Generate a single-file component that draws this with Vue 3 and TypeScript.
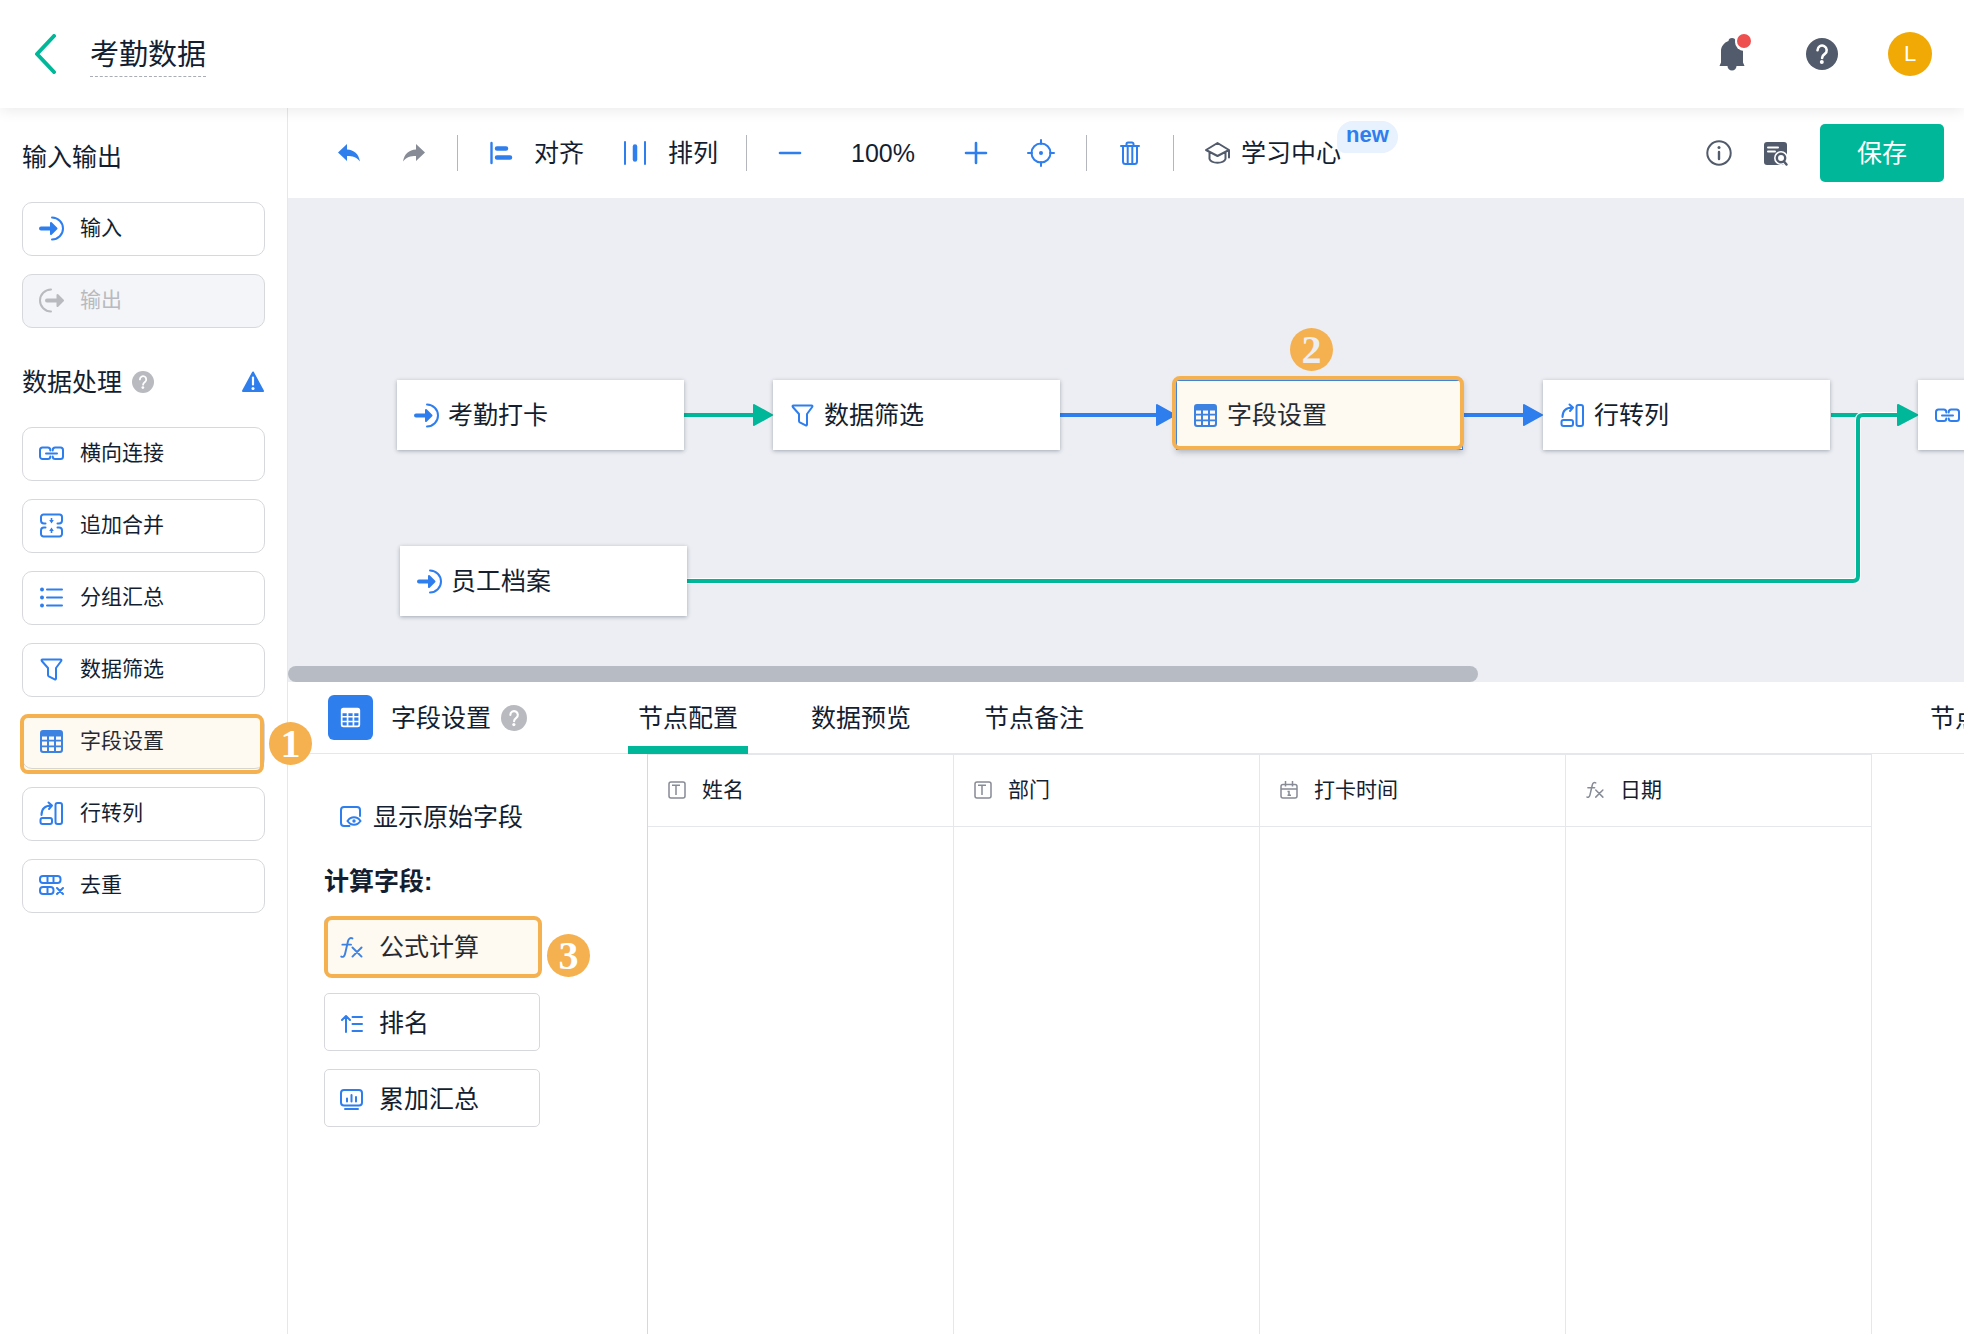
<script setup lang="ts">
import { ref } from 'vue'

interface Operator {
  name: string
  icon: string
}

interface FlowNode extends Operator {
  id: number
  x: number
  y: number
  step?: number
}

const processing: Operator[] = [
  { name: '横向连接', icon: 'link' },
  { name: '追加合并', icon: 'merge' },
  { name: '分组汇总', icon: 'list' },
  { name: '数据筛选', icon: 'filter' },
  { name: '字段设置', icon: 'grid' },
  { name: '行转列', icon: 'pivot' },
  { name: '去重', icon: 'dedupe' },
]
const activeOperator = ref('字段设置')

const nodes: FlowNode[] = [
  { id: 1, name: '考勤打卡', icon: 'input', x: 109, y: 182 },
  { id: 2, name: '数据筛选', icon: 'filter', x: 485, y: 182 },
  { id: 3, name: '字段设置', icon: 'grid', x: 888, y: 182, step: 2 },
  { id: 4, name: '行转列', icon: 'pivot', x: 1255, y: 182 },
  { id: 5, name: '', icon: 'link', x: 1630, y: 182 },
  { id: 6, name: '员工档案', icon: 'input', x: 112, y: 348 },
]

const tabs = ['节点配置', '数据预览', '节点备注']
const activeTab = ref(tabs[0])

const columns: Operator[] = [
  { name: '姓名', icon: 'text' },
  { name: '部门', icon: 'text' },
  { name: '打卡时间', icon: 'calendar' },
  { name: '日期', icon: 'fx' },
]
</script>

<template>
  <div class="app">
    <svg class="sprite" aria-hidden="true">
      <symbol id="input" viewBox="0 0 25 25">
        <path d="M13 1.5a11 11 0 0 1 0 22" fill="none" stroke="currentColor" stroke-width="2" stroke-linecap="round" />
        <path d="M2 12.500h10" stroke="currentColor" stroke-width="4" stroke-linecap="round" />
        <path d="M12 7l5.500 5.500-5.500 5.500z" fill="currentColor" stroke="currentColor" stroke-width="2" stroke-linejoin="round" />
      </symbol>
      <symbol id="output" viewBox="0 0 25 25">
        <path d="M12 1.500a11 11 0 0 0 0 22" fill="none" stroke="currentColor" stroke-width="2" stroke-linecap="round" />
        <path d="M8 12.500h10" stroke="currentColor" stroke-width="4" stroke-linecap="round" />
        <path d="M18.500 7l5.500 5.500-5.500 5.500z" fill="currentColor" stroke="currentColor" stroke-width="2" stroke-linejoin="round" />
      </symbol>
      <symbol id="link" viewBox="0 0 25 25">
        <g fill="none" stroke="currentColor" stroke-width="2" stroke-linecap="round">
          <path d="M11.300 9.500V9a2.500 2.500 0 0 0-2.500-2.500H3.500A2.500 2.500 0 0 0 1 9v6.500A2.500 2.500 0 0 0 3.500 18h5.300a2.500 2.500 0 0 0 2.500-2.500" />
          <path d="M13.700 9.500V9a2.500 2.500 0 0 1 2.500-2.500h5.300A2.500 2.500 0 0 1 24 9v6.500a2.500 2.500 0 0 1-2.500 2.500h-5.300a2.500 2.500 0 0 1-2.500-2.500" />
          <path d="M7 12.500h11" />
        </g>
      </symbol>
      <symbol id="merge" viewBox="0 0 25 25">
        <g fill="none" stroke="currentColor" stroke-width="2" stroke-linecap="round">
          <path d="M6.500 10.500H5A3 3 0 0 1 2 7.500V4a2.500 2.500 0 0 1 2.500-2.500h16A2.500 2.500 0 0 1 23 4v3.500a3 3 0 0 1-3 3h-1.500" />
          <path d="M6.500 14.500H5a3 3 0 0 0-3 3V21a2.500 2.500 0 0 0 2.500 2.500h16A2.500 2.500 0 0 0 23 21v-3.500a3 3 0 0 0-3-3h-1.500" />
        </g>
        <path d="M11.700 5h1.600v2h1.500L12.500 10.500 10.200 7h1.500zM11.700 20h1.600v-2h1.500L12.500 14.500 10.200 18h1.500z" fill="currentColor" />
      </symbol>
      <symbol id="list" viewBox="0 0 25 25">
        <path d="M8 4.500h15M8 12.500h15M8 20.500h15" stroke="currentColor" stroke-width="2" stroke-linecap="round" />
        <g fill="currentColor">
          <circle cx="3" cy="4.500" r="2" /><circle cx="3" cy="12.500" r="2" /><circle cx="3" cy="20.500" r="2" />
        </g>
      </symbol>
      <symbol id="filter" viewBox="0 0 25 25">
        <path d="M3.500 2.500h18c1 0 1.200.800.700 1.500L17 11v10.500c0 .900-.600 1.200-1.300.800L9.800 19.300c-.500-.300-.800-.600-.800-1.200V11L2.800 4c-.500-.700-.300-1.500.700-1.500z" fill="none" stroke="currentColor" stroke-width="2" stroke-linejoin="round" />
      </symbol>
      <symbol id="grid" viewBox="0 0 25 25">
        <path d="M4 1h17a3 3 0 0 1 3 3v17a3 3 0 0 1-3 3H4a3 3 0 0 1-3-3V4a3 3 0 0 1 3-3zM3 7.500v3.300h5V7.500zM10 7.500v3.300h5V7.500zM17 7.500v3.300h5V7.500zM3 12.500v4h5v-4zM10 12.500v4h5v-4zM17 12.500v4h5v-4zM3 18.200V20.500A1.500 1.500 0 0 0 4.500 22H8v-3.800zM10 18.200V22h5v-3.800zM17 18.200V22h3.500a1.500 1.500 0 0 0 1.500-1.500V18.200z" fill="currentColor" fill-rule="evenodd" />
      </symbol>
      <symbol id="pivot" viewBox="0 0 25 25">
        <g fill="none" stroke="currentColor" stroke-width="2" stroke-linecap="round" stroke-linejoin="round">
          <rect x="1.500" y="17" width="11.500" height="6" rx="2" />
          <rect x="16.500" y="2" width="6.500" height="21" rx="2" />
          <path d="M2.500 14C2.500 8 6 4.500 12.500 4.500M9.500 1.500l3.500 3-3 3.500" />
        </g>
      </symbol>
      <symbol id="dedupe" viewBox="0 0 25 25">
        <g fill="none" stroke="currentColor" stroke-width="2" stroke-linecap="round">
          <rect x="1" y="3" width="20.500" height="7" rx="3" />
          <path d="M8.500 3v7M14.500 3v7" />
          <rect x="1" y="14" width="13.500" height="7" rx="3" />
          <path d="M8.500 14v7M18 15l6 6M24 15l-6 6" />
        </g>
      </symbol>
      <symbol id="help" viewBox="0 0 32 32">
        <circle cx="16" cy="16" r="16" fill="currentColor" />
        <path d="M11.500 12.200a4.600 4.600 0 1 1 7.300 3.700c-1.700 1.200-2.700 2-2.700 4" fill="none" stroke="#fff" stroke-width="2.600" stroke-linecap="round" />
        <circle cx="15.800" cy="24" r="2" fill="#fff" />
      </symbol>
      <symbol id="fx" viewBox="0 0 24 24">
        <g fill="none" stroke="currentColor" stroke-width="2" stroke-linecap="round">
          <path d="M13 2.500c-2.300-1-4 .200-4.600 2.800L5.300 18.500c-.600 2.600-2 3.800-4 3M2.500 9h9M13 12l9.500 9.500M22.500 12L13 21.500" />
        </g>
      </symbol>
      <symbol id="text" viewBox="0 0 18 18">
        <rect x="1" y="1" width="16" height="16" rx="2" fill="none" stroke="currentColor" stroke-width="1.500" />
        <path d="M4 4.300h8M8 4.300V14" stroke="currentColor" stroke-width="1.500" />
      </symbol>
      <symbol id="calendar" viewBox="0 0 18 18">
        <g fill="none" stroke="currentColor" stroke-width="1.500">
          <rect x="1" y="3.500" width="16" height="13.500" rx="2" />
          <path d="M1 8h16M5.500 0v5.500M12.500 0v5.500M7.500 10.500H9V14M7.500 14.300h3.500" />
        </g>
      </symbol>
    </svg>

    <header class="topbar">
      <button class="plain back" aria-label="返回">
        <svg width="24" height="40" viewBox="0 0 24 40">
          <path d="M20 2L3 20l17 18" fill="none" stroke="currentColor" stroke-width="4" stroke-linecap="round" stroke-linejoin="round" />
        </svg>
      </button>
      <h1 class="title">考勤数据</h1>
      <div class="account">
        <button class="plain bell" aria-label="通知">
          <svg width="32" height="36" viewBox="0 0 32 36">
            <path d="M16 2c2 0 3.500 1.300 3.500 3 4.500 1.600 7.500 5.500 7.500 10v11.500l1.500 3.500H20.500a4.500 4.500 0 0 1-9 0H3.500L5 26.500V15C5 10.500 8 6.600 12.500 5c0-1.700 1.500-3 3.500-3z" fill="currentColor" />
            <circle cx="28" cy="6" r="9" fill="#fff" />
          </svg>
          <span class="dot"></span>
        </button>
        <button class="plain" aria-label="帮助"><svg width="32" height="32"><use href="#help" /></svg></button>
        <button class="plain avatar">L</button>
      </div>
    </header>

    <div class="main">
      <aside class="sidebar">
        <h2 class="group-title">输入输出</h2>
        <div class="operators">
          <button class="operator">
            <svg class="op-icon"><use href="#input" /></svg>输入
          </button>
          <button class="operator" disabled>
            <svg class="op-icon"><use href="#output" /></svg>输出
          </button>
        </div>
        <h2 class="group-title">
          数据处理
          <svg class="hint" width="22" height="22"><use href="#help" /></svg>
          <svg class="warning" width="24" height="24" viewBox="0 0 24 24">
            <path d="M12 2.500L22 21H2z" fill="currentColor" stroke="currentColor" stroke-width="2" stroke-linejoin="round" />
            <path d="M12 7.500v7" stroke="#fff" stroke-width="2.200" stroke-linecap="round" />
            <circle cx="12" cy="18.500" r="1.500" fill="#fff" />
          </svg>
        </h2>
        <div class="operators">
          <button
            v-for="op in processing"
            :key="op.name"
            class="operator"
            :class="{ marked: op.name === activeOperator }"
            @click="activeOperator = op.name"
          >
            <svg class="op-icon"><use :href="'#' + op.icon" /></svg>{{ op.name }}
            <span v-if="op.name === activeOperator" class="step">1</span>
          </button>
        </div>
      </aside>

      <main class="workspace">
        <div class="toolbar">
          <div class="tools history">
            <button class="plain blue" aria-label="撤销">
              <svg width="24" height="24" viewBox="0 0 24 24"><path d="M1 11.500L10 3v5.500c7 .500 11.500 4 13 12-3.500-4.500-7.500-5.500-13-5.500v5z" fill="currentColor" /></svg>
            </button>
            <button class="plain muted" aria-label="重做">
              <svg width="24" height="24" viewBox="0 0 24 24"><path d="M23 11.500L14 3v5.500c-7 .500-11.500 4-13 12 3.500-4.500 7.500-5.500 13-5.500v5z" fill="currentColor" /></svg>
            </button>
          </div>
          <div class="tools layout">
            <button class="plain labelled">
              <svg class="blue" width="24" height="24" viewBox="0 0 24 24">
                <path d="M2.500 2v20" stroke="currentColor" stroke-width="2.400" stroke-linecap="round" />
                <path d="M8 7.500h9M8 16.500h13" stroke="currentColor" stroke-width="4.500" stroke-linecap="round" />
              </svg>对齐
            </button>
            <button class="plain labelled">
              <svg class="blue" width="24" height="24" viewBox="0 0 24 24">
                <path d="M2 1v22M22 1v22" stroke="currentColor" stroke-width="2" stroke-linecap="round" />
                <path d="M12 5.500v13" stroke="currentColor" stroke-width="4.500" stroke-linecap="round" />
              </svg>排列
            </button>
          </div>
          <div class="tools">
            <div class="zoomer">
              <button class="plain blue" aria-label="缩小">
                <svg width="24" height="24" viewBox="0 0 24 24"><path d="M2 12h20" stroke="currentColor" stroke-width="2.600" stroke-linecap="round" /></svg>
              </button>
              <span>100%</span>
              <button class="plain blue" aria-label="放大">
                <svg width="24" height="24" viewBox="0 0 24 24"><path d="M2 12h20M12 2v20" stroke="currentColor" stroke-width="2.600" stroke-linecap="round" /></svg>
              </button>
            </div>
            <button class="plain blue" aria-label="居中">
              <svg width="28" height="28" viewBox="0 0 28 28">
                <circle cx="14" cy="14" r="9.500" fill="none" stroke="currentColor" stroke-width="2" />
                <path d="M14 1v4M14 23v4M1 14h4M23 14h4" stroke="currentColor" stroke-width="2" stroke-linecap="round" />
                <circle cx="14" cy="14" r="2" fill="currentColor" />
              </svg>
            </button>
          </div>
          <div class="tools">
            <button class="plain blue" aria-label="删除">
              <svg width="24" height="24" viewBox="0 0 24 24">
                <g fill="none" stroke="currentColor" stroke-width="2" stroke-linecap="round">
                  <path d="M3 5h18M8.500 4.500V3A1.500 1.500 0 0 1 10 1.500h4A1.500 1.500 0 0 1 15.500 3v1.500M5 5v15.500A2.500 2.500 0 0 0 7.500 23h9a2.500 2.500 0 0 0 2.500-2.500V5M9.700 6v16M14.300 6v16" />
                </g>
              </svg>
            </button>
          </div>
          <div class="tools">
            <a class="learn" href="#learn">
              <svg width="25" height="25" viewBox="0 0 25 25">
                <g fill="none" stroke="currentColor" stroke-width="2" stroke-linecap="round" stroke-linejoin="round">
                  <path d="M12.500 2L24 9l-11.500 6L1 9zM4.500 11.500V18c2 5 14 5 16 0v-6.500M24 9.500v7" />
                </g>
              </svg>
              学习中心
              <span class="new">new</span>
            </a>
          </div>
          <div class="actions">
            <button class="plain slate" aria-label="信息">
              <svg width="26" height="26" viewBox="0 0 26 26">
                <circle cx="13" cy="13" r="11.700" fill="none" stroke="currentColor" stroke-width="2" />
                <circle cx="13" cy="7.500" r="1.500" fill="currentColor" />
                <path d="M13 12v7" stroke="currentColor" stroke-width="2.400" stroke-linecap="round" />
              </svg>
            </button>
            <button class="plain slate" aria-label="查看">
              <svg width="26" height="26" viewBox="0 0 26 26">
                <rect x="1" y="2" width="23" height="23" rx="3" fill="currentColor" />
                <path d="M5 7.500h10M5 11.500h7" stroke="#fff" stroke-width="2" stroke-linecap="round" />
                <circle cx="18" cy="18" r="7" fill="#fff" />
                <path d="M18 18l7 8" stroke="#fff" stroke-width="5" />
                <circle cx="18" cy="18" r="4.200" fill="none" stroke="currentColor" stroke-width="2.400" />
                <path d="M21 21.500l2.500 3" stroke="currentColor" stroke-width="2.400" stroke-linecap="round" />
              </svg>
            </button>
            <button class="save">保存</button>
          </div>
        </div>

        <div class="canvas">
          <svg class="edges" aria-hidden="true">
            <g fill="none" stroke-width="4">
              <path d="M396 217h75M1543 217h70" stroke="#00b899" />
              <path d="M772 217h100M1175 217h62" stroke="#2f7eee" />
              <path d="M399 383h1166q5 0 5-5V222q0-5 5-5h38" stroke="#fff" stroke-width="6" />
              <path d="M399 383h1166q5 0 5-5V222q0-5 5-5h38" stroke="#00b899" />
            </g>
            <g stroke-width="2" stroke-linejoin="round">
              <path d="M466 207l18 10-18 10zM1610 207l19 10-19 10z" fill="#00b899" stroke="#00b899" />
              <path d="M869 207l18 10-18 10zM1236 207l18 10-18 10z" fill="#2f7eee" stroke="#2f7eee" />
            </g>
          </svg>
          <button
            v-for="node in nodes"
            :key="node.id"
            class="node"
            :class="{ marked: node.step }"
            :style="{ left: node.x + 'px', top: node.y + 'px' }"
          >
            <svg class="op-icon"><use :href="'#' + node.icon" /></svg>{{ node.name }}
            <span v-if="node.step" class="step">{{ node.step }}</span>
          </button>
        </div>
        <div class="scroll"><div class="thumb"></div></div>

        <section class="panel">
          <div class="panel-head">
            <span class="tile"><svg width="21" height="21"><use href="#grid" /></svg></span>
            <h2 class="panel-title">字段设置</h2>
            <svg class="hint" width="26" height="26"><use href="#help" /></svg>
            <nav class="tabs">
              <button
                v-for="tab in tabs"
                :key="tab"
                class="tab"
                :class="{ active: tab === activeTab }"
                @click="activeTab = tab"
              >{{ tab }}</button>
            </nav>
            <div class="overflow-tab">节点</div>
          </div>
          <div class="panel-body">
            <div class="fields">
              <button class="plain source">
                <svg class="blue" width="22" height="22" viewBox="0 0 22 22">
                  <g fill="none" stroke="currentColor" stroke-width="2" stroke-linecap="round">
                    <path d="M9.500 20H4a3 3 0 0 1-3-3V4a3 3 0 0 1 3-3h13a3 3 0 0 1 3 3v6" />
                    <path d="M7.500 15c3.500-5 9.500-5 13 0-3.500 5-9.500 5-13 0z" />
                  </g>
                  <circle cx="14" cy="15" r="1.700" fill="currentColor" />
                </svg>显示原始字段
              </button>
              <h3 class="fields-title">计算字段:</h3>
              <div class="calcs">
                <button class="calc marked">
                  <svg class="blue" width="23" height="23"><use href="#fx" /></svg>公式计算
                  <span class="step">3</span>
                </button>
                <button class="calc">
                  <svg class="blue" width="23" height="23" viewBox="0 0 23 23">
                    <path d="M6 20V4M2 8l4-4 4 4M12.500 5H22M12.500 12H22M12.500 19H22" fill="none" stroke="currentColor" stroke-width="2" stroke-linecap="round" stroke-linejoin="round" />
                  </svg>排名
                </button>
                <button class="calc">
                  <svg class="blue" width="23" height="23" viewBox="0 0 23 23">
                    <g fill="none" stroke="currentColor" stroke-width="2" stroke-linecap="round">
                      <rect x="1" y="2" width="21" height="15.500" rx="3" />
                      <path d="M7 10.500v3M11.500 7v6.500M16 9v4.500M5 21h13" />
                    </g>
                  </svg>累加汇总
                </button>
              </div>
            </div>
            <table class="preview">
              <thead>
                <tr>
                  <th v-for="col in columns" :key="col.name" scope="col">
                    <span class="col-head">
                      <svg width="18" height="18"><use :href="'#' + col.icon" /></svg>{{ col.name }}
                    </span>
                  </th>
                </tr>
              </thead>
              <tbody>
                <tr><td v-for="col in columns" :key="col.name"></td></tr>
              </tbody>
            </table>
          </div>
        </section>
      </main>
    </div>
  </div>
</template>

<style>
body {
  margin: 0;
}
</style>

<style scoped>
.app {
  display: flex;
  flex-direction: column;
  min-height: 100vh;
  overflow: hidden;
  background: #fff;
  color: #141e31;
  font-family: "Liberation Sans", "Noto Sans CJK SC", sans-serif;
  font-size: 25px;
  line-height: 36px;
}
.app * {
  box-sizing: border-box;
}
.app svg {
  display: block;
  flex: none;
}
.app .sprite {
  position: absolute;
  width: 0;
  height: 0;
}
h1, h2, h3 {
  margin: 0;
  font-size: 25px;
  font-weight: 400;
}
button {
  font: inherit;
  color: inherit;
  text-align: left;
  cursor: pointer;
}
.plain {
  display: flex;
  align-items: center;
  padding: 0;
  border: 0;
  background: none;
}
.blue {
  color: #2f7eee;
}
.muted {
  color: #868b95;
}
.slate {
  color: #525b6b;
}

.topbar {
  position: relative;
  z-index: 3;
  display: flex;
  align-items: center;
  height: 108px;
  padding: 0 32px 0 34px;
  background: #fff;
  box-shadow: 0 2px 14px rgba(0, 0, 0, 0.09);
}
.back {
  color: #00b899;
}
.title {
  margin-left: 32px;
  padding: 3px 0 0;
  border-bottom: 1px dashed #a9adb5;
  font-size: 29px;
  line-height: 42px;
}
.account {
  display: flex;
  align-items: center;
  gap: 50px;
  margin-left: auto;
  color: #525b6b;
}
.bell {
  position: relative;
  margin-right: 8px;
}
.dot {
  position: absolute;
  top: -2px;
  right: -3px;
  width: 14px;
  height: 14px;
  border-radius: 50%;
  background: #ee5050;
}
.avatar {
  justify-content: center;
  width: 44px;
  height: 44px;
  border-radius: 50%;
  background: #f0a905;
  color: #fff;
  font-size: 22px;
}

.main {
  display: flex;
  flex: 1;
}
.sidebar {
  position: relative;
  z-index: 2;
  flex: none;
  width: 288px;
  padding: 31px 22px;
  border-right: 1px solid #e6e7ea;
}
.group-title {
  display: flex;
  align-items: center;
  margin-bottom: 27px;
}
.operators + .group-title {
  margin-top: 36px;
}
.hint {
  margin-left: 10px;
  color: #b8babf;
}
.warning {
  margin-left: auto;
  color: #2f7eee;
}
.operators {
  display: flex;
  flex-direction: column;
  gap: 18px;
}
.operator {
  position: relative;
  display: flex;
  align-items: center;
  gap: 16px;
  height: 54px;
  padding: 0 16px 2px;
  border: 1px solid #d6d8db;
  border-radius: 10px;
  background: #fff;
  font-size: 21px;
}
.operator:disabled {
  background: #f4f5f8;
  color: #b8babf;
}
.op-icon {
  width: 25px;
  height: 25px;
  color: #2f7eee;
}
.operator:disabled .op-icon {
  color: #b8babf;
}

/* Walkthrough highlight and numbered step */
.marked::after {
  content: "";
  position: absolute;
  border: 4px solid #f5b04f;
  border-radius: 8px;
  background: rgba(245, 176, 79, 0.08);
}
.operator.marked::after {
  inset: -2px 0 -6px -3px;
}
.step {
  position: absolute;
  z-index: 1;
  display: flex;
  align-items: center;
  justify-content: center;
  width: 43px;
  height: 43px;
  border-radius: 50%;
  background: #f5b04f;
  color: #fff;
  font-family: "Liberation Serif", serif;
  font-size: 40px;
  font-weight: 700;
  line-height: 43px;
}
.operator .step {
  left: 246px;
  top: 6px;
}

.workspace {
  display: flex;
  flex: 1;
  flex-direction: column;
  min-width: 0;
}
.toolbar {
  display: flex;
  align-items: center;
  height: 90px;
  padding: 0 20px 0 18px;
}
.tools {
  display: flex;
  align-items: center;
  gap: 39px;
  height: 36px;
  padding: 0 31px;
}
.history {
  gap: 41px;
}
.layout {
  padding-right: 28px;
}
.tools + .tools {
  border-left: 1px solid #b3b6bc;
}
.labelled {
  gap: 21px;
}
.zoomer {
  display: flex;
  align-items: center;
  gap: 49px;
}
.learn {
  position: relative;
  display: flex;
  align-items: center;
  gap: 11px;
  color: inherit;
  text-decoration: none;
}
.learn svg {
  color: #525b6b;
}
.new {
  position: absolute;
  left: 132px;
  top: -14px;
  padding: 0 9px;
  border-radius: 16px 16px 16px 8px;
  background: #e8f1fe;
  color: #2f7eee;
  font-size: 22px;
  font-weight: 700;
  line-height: 28px;
  padding-bottom: 4px;
}
.actions {
  display: flex;
  align-items: center;
  gap: 31px;
  margin-left: auto;
}
.save {
  width: 124px;
  height: 58px;
  padding: 0;
  border: 0;
  border-radius: 5px;
  background: #00b899;
  color: #fff;
  text-align: center;
}

.canvas {
  position: relative;
  height: 468px;
  overflow: hidden;
  background: #edeef3;
}
.edges {
  position: absolute;
  width: 100%;
  height: 100%;
}
.node {
  position: absolute;
  display: flex;
  align-items: center;
  gap: 9px;
  width: 287px;
  height: 70px;
  padding: 0 17px;
  border: 0;
  background: #fff;
  box-shadow: 0 1px 4px rgba(20, 40, 60, 0.35);
}
.canvas .marked {
  overflow: visible;
  box-shadow: inset 0 0 0 1px #2f7eee, 0 2px 6px rgba(20, 40, 60, 0.3);
}
.node.marked::after {
  inset: -4px -1px 0 -4px;
}
.node .step {
  left: 114px;
  top: -52px;
  color: #edeef3;
}
.scroll {
  height: 16px;
  background: #edeef3;
}
.thumb {
  width: 71%;
  height: 16px;
  border-radius: 8px;
  background: #b6bbc4;
}

.panel {
  display: flex;
  flex: 1;
  flex-direction: column;
}
.panel-head {
  display: flex;
  align-items: center;
  height: 72px;
  padding-left: 40px;
  border-bottom: 1px solid #e6e7ea;
}
.tile {
  display: flex;
  align-items: center;
  justify-content: center;
  width: 45px;
  height: 45px;
  border-radius: 6px;
  background: #2f7eee;
  color: #fff;
}
.panel-title {
  margin-left: 18px;
}
.tabs {
  display: flex;
  align-self: stretch;
  gap: 53px;
  margin-left: 101px;
}
.tab {
  height: 72px;
  padding: 0 10px;
  border: solid transparent;
  border-width: 8px 0;
  background: none;
}
.tab.active {
  border-bottom-color: #00b899;
}
.overflow-tab {
  width: 34px;
  margin-left: auto;
  overflow: hidden;
  white-space: nowrap;
}
.panel-body {
  display: flex;
  flex: 1;
}
.fields {
  flex: none;
  width: 359px;
  padding: 45px 36px;
}
.source {
  gap: 11px;
  padding-left: 16px;
}
.fields-title {
  margin: 28px 0 18px;
  font-weight: 700;
}
.calcs {
  display: flex;
  flex-direction: column;
  gap: 18px;
}
.calc {
  position: relative;
  display: flex;
  align-items: center;
  gap: 16px;
  width: 216px;
  height: 58px;
  padding: 2px 15px 0;
  border: 1px solid #d6d8db;
  border-radius: 5px;
  background: #fff;
}
.calc.marked::after {
  inset: -2px -3px -4px -1px;
}
.calc .step {
  left: 222px;
  top: 16px;
}
.preview {
  border-left: 1px solid #d6d8db;
  border-spacing: 0;
  table-layout: fixed;
}
.preview th,
.preview td {
  width: 306px;
  padding: 0;
  border-right: 1px solid #e6e7ea;
}
.preview th {
  height: 73px;
  padding: 0 0 2px 20px;
  border-top: 1px solid #e6e7ea;
  border-bottom: 1px solid #e6e7ea;
  font-size: 21px;
  font-weight: 400;
  text-align: left;
}
.col-head {
  display: flex;
  align-items: center;
  gap: 16px;
}
.col-head svg {
  color: #868b95;
}
</style>
